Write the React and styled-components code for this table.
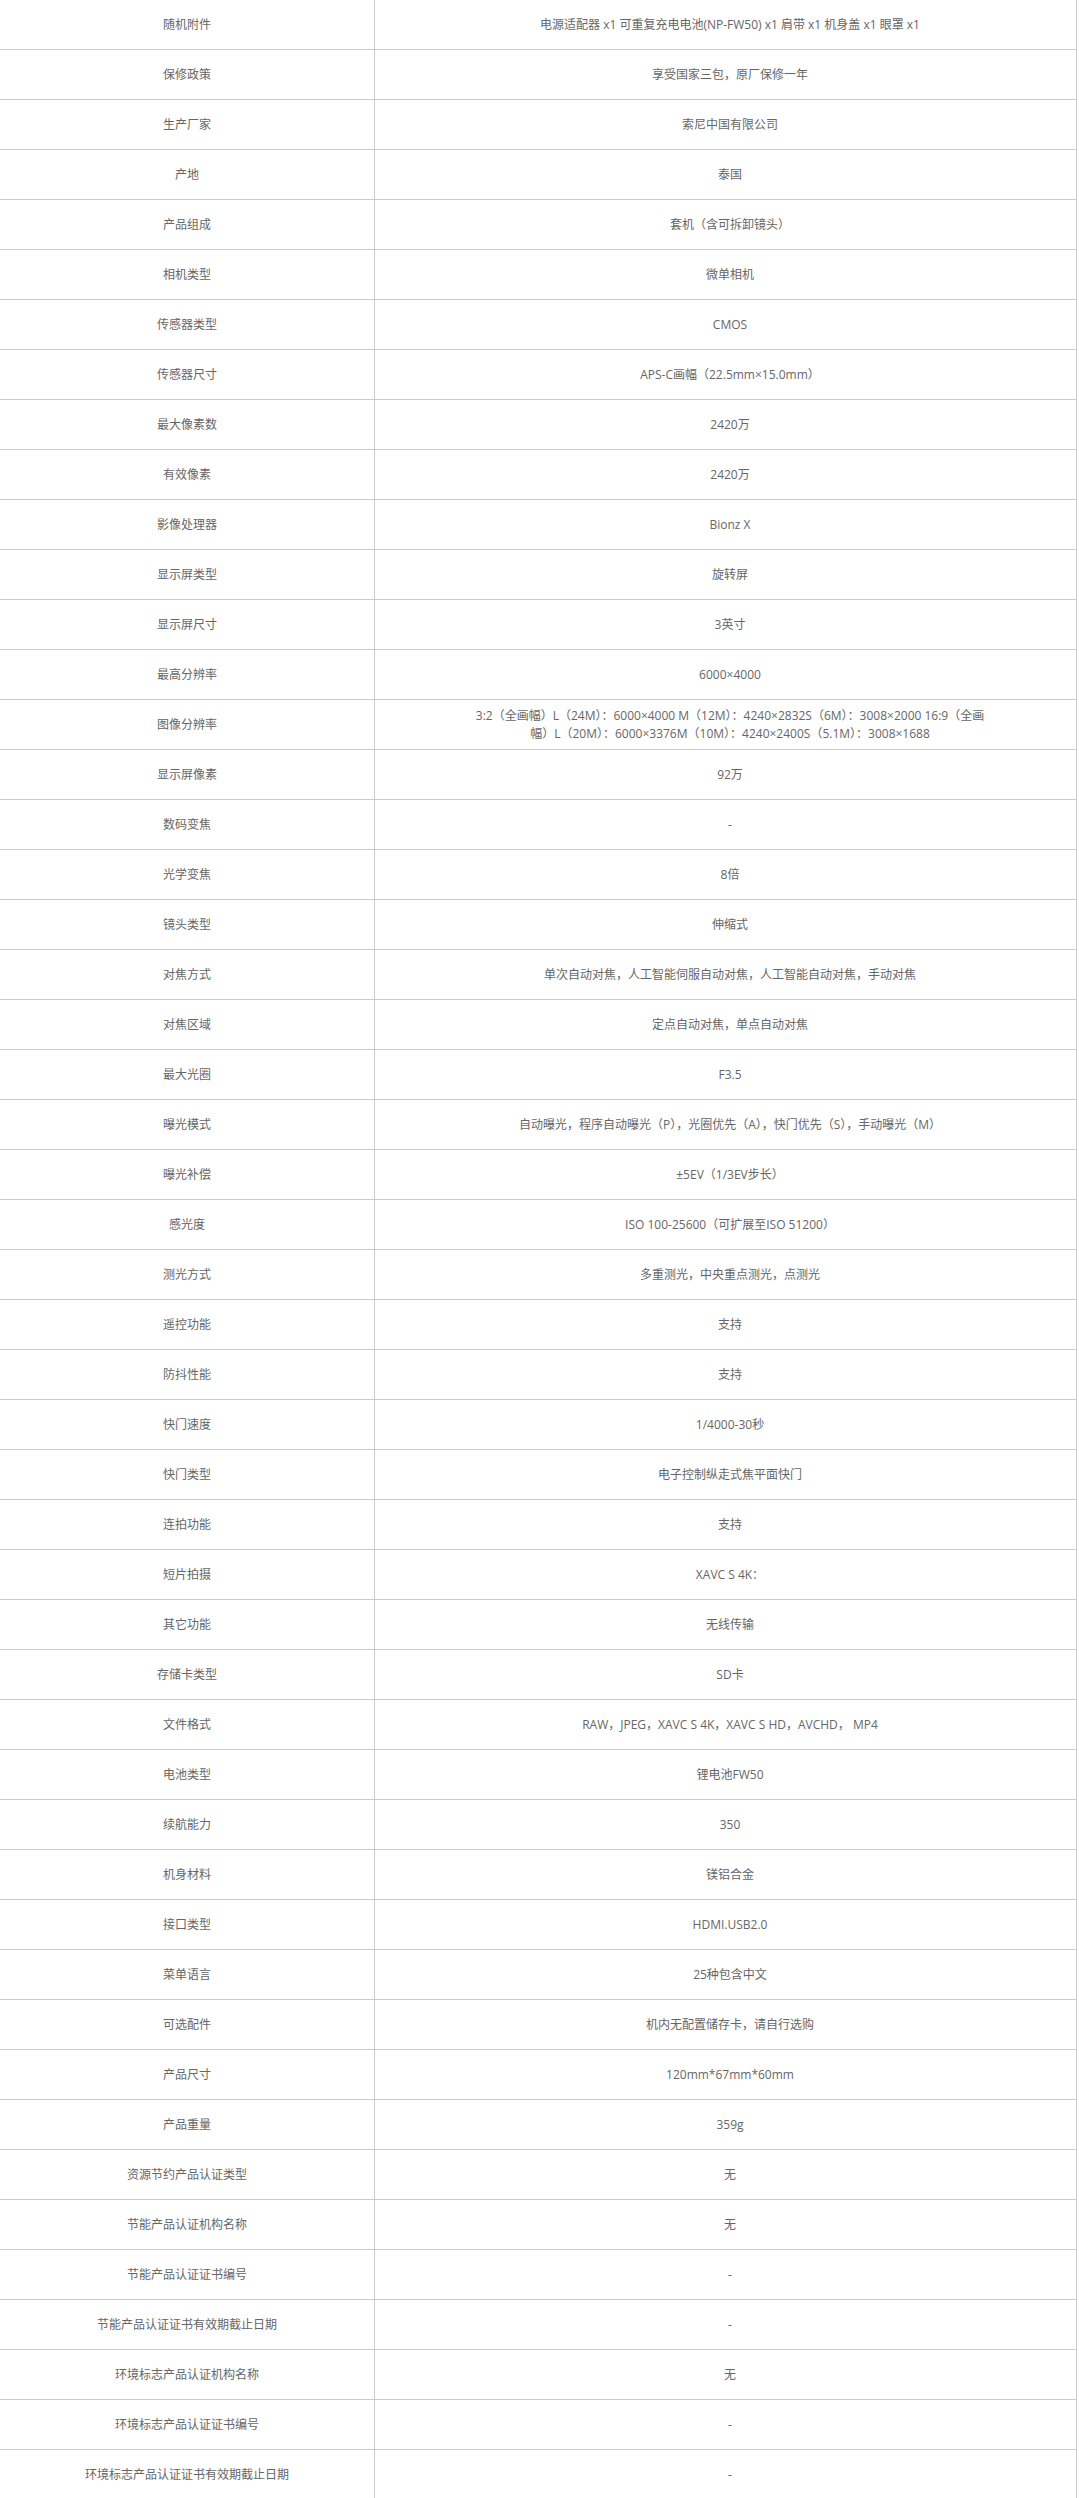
import React from 'react';
import styled, { createGlobalStyle } from 'styled-components';

const specs = [
  ['随机附件', '电源适配器 x1 可重复充电电池(NP-FW50) x1 肩带 x1 机身盖 x1 眼罩 x1'],
  ['保修政策', '享受国家三包，原厂保修一年'],
  ['生产厂家', '索尼中国有限公司'],
  ['产地', '泰国'],
  ['产品组成', '套机（含可拆卸镜头）'],
  ['相机类型', '微单相机'],
  ['传感器类型', 'CMOS'],
  ['传感器尺寸', 'APS-C画幅（22.5mm×15.0mm）'],
  ['最大像素数', '2420万'],
  ['有效像素', '2420万'],
  ['影像处理器', 'Bionz X'],
  ['显示屏类型', '旋转屏'],
  ['显示屏尺寸', '3英寸'],
  ['最高分辨率', '6000×4000'],
  [
    '图像分辨率',
    '3:2（全画幅）L（24M）：6000×4000 M（12M）：4240×2832S（6M）：3008×2000 16:9（全画幅）L（20M）：6000×3376M（10M）：4240×2400S（5.1M）：3008×1688',
  ],
  ['显示屏像素', '92万'],
  ['数码变焦', '-'],
  ['光学变焦', '8倍'],
  ['镜头类型', '伸缩式'],
  ['对焦方式', '单次自动对焦，人工智能伺服自动对焦，人工智能自动对焦，手动对焦'],
  ['对焦区域', '定点自动对焦，单点自动对焦'],
  ['最大光圈', 'F3.5'],
  ['曝光模式', '自动曝光，程序自动曝光（P），光圈优先（A），快门优先（S），手动曝光（M）'],
  ['曝光补偿', '±5EV（1/3EV步长）'],
  ['感光度', 'ISO 100-25600（可扩展至ISO 51200）'],
  ['测光方式', '多重测光，中央重点测光，点测光'],
  ['遥控功能', '支持'],
  ['防抖性能', '支持'],
  ['快门速度', '1/4000-30秒'],
  ['快门类型', '电子控制纵走式焦平面快门'],
  ['连拍功能', '支持'],
  ['短片拍摄', 'XAVC S 4K：'],
  ['其它功能', '无线传输'],
  ['存储卡类型', 'SD卡'],
  ['文件格式', 'RAW，JPEG，XAVC S 4K，XAVC S HD，AVCHD， MP4'],
  ['电池类型', '锂电池FW50'],
  ['续航能力', '350'],
  ['机身材料', '镁铝合金'],
  ['接口类型', 'HDMI.USB2.0'],
  ['菜单语言', '25种包含中文'],
  ['可选配件', '机内无配置储存卡，请自行选购'],
  ['产品尺寸', '120mm*67mm*60mm'],
  ['产品重量', '359g'],
  ['资源节约产品认证类型', '无'],
  ['节能产品认证机构名称', '无'],
  ['节能产品认证证书编号', '-'],
  ['节能产品认证证书有效期截止日期', '-'],
  ['环境标志产品认证机构名称', '无'],
  ['环境标志产品认证证书编号', '-'],
  ['环境标志产品认证证书有效期截止日期', '-'],
];

const GlobalStyle = createGlobalStyle`
  body {
    margin: 0;
    background: #fff;
    font-family: "Open Sans", "Noto Sans CJK SC", sans-serif;
  }
`;

const SpecTable = styled.div`
  width: 1077px;
  display: flex;
  flex-direction: column;
  font-size: 12px;
  color: #666;
`;

const SpecRow = styled.div`
  display: grid;
  grid-template-columns: 375px 702px;
  height: 50px;
  box-sizing: border-box;
  border-bottom: 1px solid #ccc;
`;

const Cell = styled.div`
  display: flex;
  align-items: center;
  justify-content: center;
  text-align: center;
  box-sizing: border-box;
  border-right: 1px solid #ccc;
  line-height: 18px;
  padding: ${(props) => (props.$value ? '0 86px 0 95px' : '0 10px')};
`;

const App = () => (
  <>
    <GlobalStyle />
    <SpecTable>
      {specs.map(([label, value]) => (
        <SpecRow key={label}>
          <Cell>{label}</Cell>
          <Cell $value>{value}</Cell>
        </SpecRow>
      ))}
    </SpecTable>
  </>
);

export default App;
